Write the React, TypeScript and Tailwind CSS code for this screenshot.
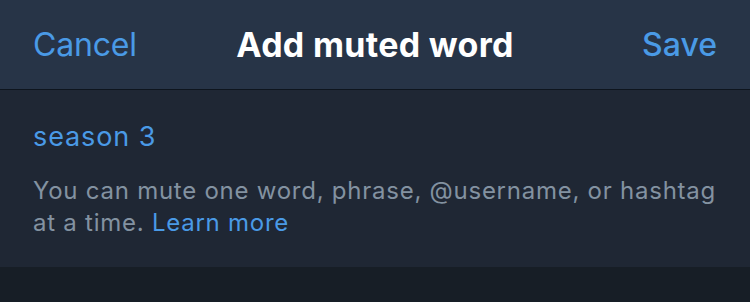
import React from "react";

export default function App() {
  return (
    <div className="w-[750px] h-[302px] flex flex-col bg-[#171e26] overflow-hidden" style={{ fontFamily: "Inter, 'Noto Sans', sans-serif" }}>
      <div className="h-[89px] shrink-0 grid grid-cols-[1fr_auto_1fr] items-center px-[33px] bg-[#273447] border-b border-[#0e151e] box-content">
        <span className="justify-self-start text-[32px] text-[#4a9ae6] tracking-[-0.2px]">Cancel</span>
        <span className="text-[34px] font-bold text-white tracking-[0.3px]">Add muted word</span>
        <span className="justify-self-end text-[32px] font-medium text-[#4a9ae6]">Save</span>
      </div>
      <div className="h-[177px] shrink-0 bg-[#1f2734] px-[33px] pt-[30px]">
        <div className="text-[27px] text-[#4a9ae6] leading-[34px] tracking-[0.9px]">season 3</div>
        <p className="mt-[21px] text-[24px] leading-[32px] text-[#8392a1] tracking-[0.75px]">
          You can mute one word, phrase, @username, or hashtag
          <br />
          at a time. <span className="text-[#4a9ae6]">Learn more</span>
        </p>
      </div>
    </div>
  );
}
